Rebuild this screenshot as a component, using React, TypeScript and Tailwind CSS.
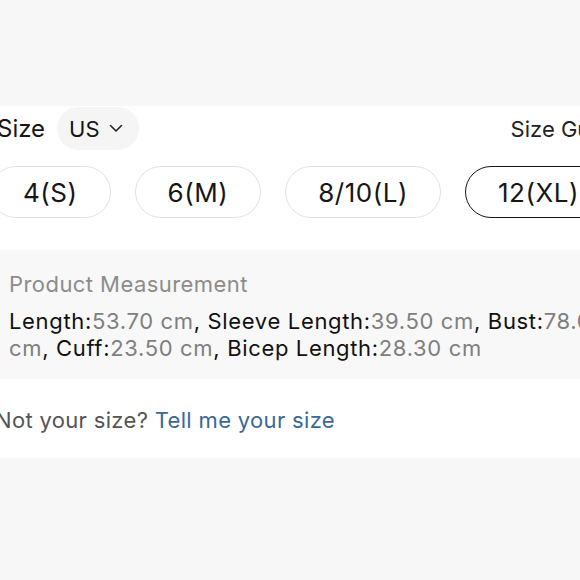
import React from "react";

const font = { fontFamily: "Inter, 'Noto Sans', sans-serif" };

function SizeButton({ label, selected }: { label: string; selected?: boolean }) {
  return (
    <div
      className={
        selected
          ? "flex h-[52px] shrink-0 items-center justify-center rounded-full border-[1.5px] border-[#161616] px-[32px] text-[26px] tracking-[0.02em] text-[#161616]"
          : "flex h-[52px] shrink-0 items-center justify-center rounded-full border-[1.5px] border-[#e2e2e2] px-[32px] text-[26px] tracking-[0.02em] text-[#161616]"
      }
    >
      {label}
    </div>
  );
}

export default function App() {
  return (
    <div className="h-[580px] w-[580px] overflow-hidden bg-[#f7f7f7]" style={font}>
      <div className="h-[106px] bg-[#f7f7f7]" />
      <div className="ml-[-3px] w-[680px] bg-white pb-[24px] pt-[1px]">
        <div className="flex h-[43px] items-center">
          <span className="text-[24px] leading-none text-[#161616]">Size</span>
          <div className="ml-[12px] flex h-[43px] items-center gap-[9px] rounded-full bg-[#f5f5f5] pl-[12px] pr-[16px]">
            <span className="text-[22px] leading-none text-[#161616]">US</span>
            <svg width="14" height="9" viewBox="0 0 14 9" fill="none">
              <polyline points="1.5,1.5 7,7 12.5,1.5" stroke="#222" strokeWidth="1.6" strokeLinecap="round" strokeLinejoin="round" />
            </svg>
          </div>
          <span className="ml-[372px] text-[22px] leading-none text-[#222]">Size Guide</span>
        </div>
        <div className="ml-[-7px] mt-[16px] flex gap-[24px]">
          <SizeButton label="4(S)" />
          <SizeButton label="6(M)" />
          <SizeButton label="8/10(L)" />
          <SizeButton label="12(XL)" selected />
        </div>
        <div className="mt-[32px] w-[660px] bg-[#f8f8f8] pb-[17px] pl-[12px] pr-[20px] pt-[21px] text-[22px] leading-[27px] tracking-[0.03em]">
          <div className="tracking-[0.02em] text-[#8c8c8c]">Product Measurement</div>
          <div className="mt-[10px] text-[#111]">
            Length:<span className="text-[#7f7f7f]">53.70 cm</span>, Sleeve Length:
            <span className="text-[#7f7f7f]">39.50 cm</span>, Bust:
            <span className="text-[#7f7f7f]">78.00</span>
            <br />
            <span className="text-[#7f7f7f]">cm</span>, Cuff:
            <span className="text-[#7f7f7f]">23.50 cm</span>, Bicep Length:
            <span className="text-[#7f7f7f]">28.30 cm</span>
          </div>
        </div>
        <div className="ml-[-2px] mt-[28px] text-[22px] leading-[27px] tracking-[0.015em] text-[#555]">
          Not your size? <span className="text-[#3a6898]">Tell me your size</span>
        </div>
      </div>
    </div>
  );
}
